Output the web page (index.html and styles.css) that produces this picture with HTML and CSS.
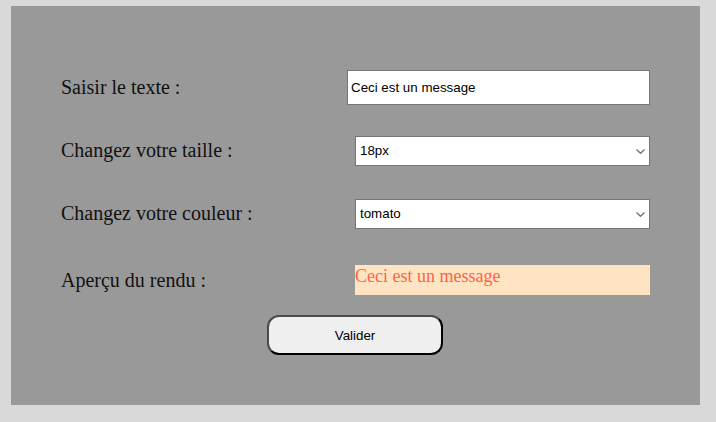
FILE: index.html
```html
<!DOCTYPE html>
<html lang="fr">
<head>
<meta charset="utf-8">
<title>Aperçu</title>
<link rel="stylesheet" href="styles.css">
</head>
<body>
<form class="panel">
  <div class="grid">
    <label class="label" for="txt">Saisir le texte :</label>
    <input class="field" id="txt" type="text" value="Ceci est un message">

    <label class="label" for="size">Changez votre taille :</label>
    <span class="select-wrap">
      <select class="choice" id="size">
        <option>18px</option>
      </select>
      <svg class="chevron" width="9" height="5" viewBox="0 0 9 5" aria-hidden="true"><path d="M0.5 0.5 L4.5 4.3 L8.5 0.5" fill="none" stroke="#6f6f6f" stroke-width="1.3"/></svg>
    </span>

    <label class="label" for="color">Changez votre couleur :</label>
    <span class="select-wrap">
      <select class="choice" id="color">
        <option>tomato</option>
      </select>
      <svg class="chevron" width="9" height="5" viewBox="0 0 9 5" aria-hidden="true"><path d="M0.5 0.5 L4.5 4.3 L8.5 0.5" fill="none" stroke="#6f6f6f" stroke-width="1.3"/></svg>
    </span>

    <span class="label">Aperçu du rendu :</span>
    <div class="preview">Ceci est un message</div>
  </div>
  <div class="actions">
    <button class="submit" type="button">Valider</button>
  </div>
</form>
</body>
</html>
```
FILE: styles.css
```css
html, body {
  margin: 0;
  padding: 0;
}
body {
  background: #d9d9d9;
  width: 716px;
  height: 422px;
  overflow: hidden;
}
.panel {
  margin: 6px 0 0 11px;
  width: 689px;
  height: 399px;
  box-sizing: border-box;
  background: #999999;
  padding: 50px 0 0 50px;
}
.grid {
  display: grid;
  grid-template-columns: 286px 303px;
  grid-template-rows: 63px 63px 63px 70px;
  align-items: center;
}
.label {
  font-family: "Liberation Serif", "Times New Roman", serif;
  font-size: 20px;
  color: #111;
}
.field {
  box-sizing: border-box;
  width: 303px;
  height: 35px;
  margin: 0;
  padding: 0 3px;
  border: 1px solid #767676;
  border-radius: 0;
  background: #fff;
  font-family: "Liberation Sans", Arial, sans-serif;
  font-size: 13.33px;
  color: #000;
  outline: none;
}
.select-wrap {
  position: relative;
  display: block;
  width: 295px;
  height: 30px;
  margin-left: 8px;
}
.choice {
  -webkit-appearance: none;
  appearance: none;
  box-sizing: border-box;
  display: block;
  width: 295px;
  height: 30px;
  margin: 0;
  padding: 0 20px 0 4px;
  border: 1px solid #767676;
  border-radius: 0;
  background: #fff;
  font-family: "Liberation Sans", Arial, sans-serif;
  font-size: 13.33px;
  color: #000;
}
.chevron {
  position: absolute;
  right: 5px;
  top: 13px;
  pointer-events: none;
}
.preview {
  box-sizing: border-box;
  width: 295px;
  height: 30px;
  margin-left: 8px;
  background: #ffe4c4;
  color: tomato;
  font-family: "Liberation Serif", "Times New Roman", serif;
  font-size: 18px;
  line-height: 22px;
}
.actions {
  display: flex;
  justify-content: center;
  padding-right: 50px;
}
.submit {
  box-sizing: border-box;
  width: 176px;
  height: 40px;
  margin: 0 1px 0 0;
  border: 2px solid;
  border-color: #4a4a4a #000 #000 #4a4a4a;
  border-radius: 12px;
  background: #efefef;
  font-family: "Liberation Sans", Arial, sans-serif;
  font-size: 13.33px;
  color: #000;
}
```
